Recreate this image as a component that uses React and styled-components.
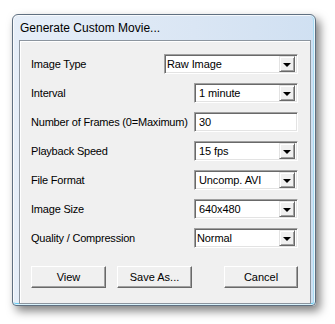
import React from "react";
import styled, { createGlobalStyle } from "styled-components";

const GlobalStyle = createGlobalStyle`
    html, body {
        margin: 0;
        padding: 0;
        background: #ffffff;
    }
    body {
        font-family: "Liberation Sans", Arial, sans-serif;
    }
`;

const Page = styled.div`
    padding: 14px 0 0 12px;
    width: 335px;
    height: 324px;
    box-sizing: border-box;
`;

const Window = styled.div`
    width: 304px;
    height: 292px;
    box-sizing: border-box;
    border: 1px solid #5f6f80;
    border-radius: 6px 6px 4px 4px;
    background: linear-gradient(to right, #e6eef8 0%, #dae6f4 60%, #d0e0f2 100%);
    box-shadow: 4px 5px 10px rgba(0, 0, 0, 0.5),
        inset 0 0 0 1px rgba(255, 255, 255, 0.75),
        inset 0 -2px 0 #67c9f0,
        inset -2px 0 0 #a8dcf4;
    padding: 0 4px 1px 6px;
    display: flex;
    flex-direction: column;
`;

const TitleBar = styled.div`
    height: 25px;
    display: flex;
    align-items: center;
    padding-left: 1px;
    font-size: 12px;
    color: #000;
`;

const Client = styled.div`
    flex: 1;
    background: #f0f0f0;
    border: 1px solid #8c959f;
    box-shadow: inset 1px 1px 0 #ffffff;
    padding: 13px 12px 15px 11px;
    display: flex;
    flex-direction: column;
`;

const Form = styled.div`
    display: flex;
    flex-direction: column;
    gap: 9px;
`;

const Row = styled.div`
    display: flex;
    align-items: center;
    justify-content: space-between;
    height: 20px;
`;

const Label = styled.span`
    font-size: 11px;
    letter-spacing: -0.2px;
    color: #000;
`;

const Sunken = styled.div`
    width: ${({ w }) => w}px;
    height: 20px;
    box-sizing: border-box;
    background: #fff;
    border: 1px solid;
    border-color: #a0a0a0 #ffffff #ffffff #a0a0a0;
    box-shadow: inset 1px 1px 0 #696969, inset -1px -1px 0 #e3e3e3;
    display: flex;
    align-items: center;
    padding: 2px 2px 2px ${({ flush }) => (flush ? "2px" : "4px")};
    font-size: 11px;
    letter-spacing: -0.1px;
    color: #000;
`;

const Value = styled.span`
    flex: 1;
`;

const ArrowButton = styled.div`
    width: 16px;
    height: 16px;
    box-sizing: border-box;
    background: #f0f0f0;
    border: 1px solid;
    border-color: #e3e3e3 #696969 #696969 #e3e3e3;
    box-shadow: inset 1px 1px 0 #ffffff, inset -1px -1px 0 #a0a0a0;
    display: flex;
    align-items: center;
    justify-content: center;
`;

const Triangle = styled.span`
    width: 0;
    height: 0;
    border-left: 4px solid transparent;
    border-right: 4px solid transparent;
    border-top: 4px solid #000;
    margin-top: 1px;
`;

const Buttons = styled.div`
    margin-top: 18px;
    display: flex;
    gap: 11px;
`;

const Button = styled.div`
    width: ${({ w }) => w || 75}px;
    height: 22px;
    box-sizing: border-box;
    background: #f0f0f0;
    border: 1px solid;
    border-color: #ffffff #696969 #696969 #ffffff;
    box-shadow: inset -1px -1px 0 #a0a0a0;
    display: flex;
    align-items: center;
    justify-content: center;
    font-size: 11px;
    color: #000;
    margin-left: ${({ push }) => (push ? "auto" : "0")};
`;

const Combo = ({ value, w = 104, flush }) => (
    <Sunken w={w} flush={flush}>
        <Value>{value}</Value>
        <ArrowButton>
            <Triangle />
        </ArrowButton>
    </Sunken>
);

const rows = [
    { label: "Image Type", value: "Raw Image", w: 134, flush: true },
    { label: "Interval", value: "1 minute" },
    { label: "Number of Frames (0=Maximum)", value: "30", text: true },
    { label: "Playback Speed", value: "15 fps" },
    { label: "File Format", value: "Uncomp. AVI" },
    { label: "Image Size", value: "640x480" },
    { label: "Quality / Compression", value: "Normal", flush: true },
];

export default function App() {
    return (
        <Page>
            <GlobalStyle />
            <Window>
                <TitleBar>Generate Custom Movie...</TitleBar>
                <Client>
                    <Form>
                        {rows.map((r) => (
                            <Row key={r.label}>
                                <Label>{r.label}</Label>
                                {r.text ? (
                                    <Sunken w={104}>{r.value}</Sunken>
                                ) : (
                                    <Combo value={r.value} w={r.w} flush={r.flush} />
                                )}
                            </Row>
                        ))}
                    </Form>
                    <Buttons>
                        <Button>View</Button>
                        <Button>Save As...</Button>
                        <Button push w={74}>Cancel</Button>
                    </Buttons>
                </Client>
            </Window>
        </Page>
    );
}
